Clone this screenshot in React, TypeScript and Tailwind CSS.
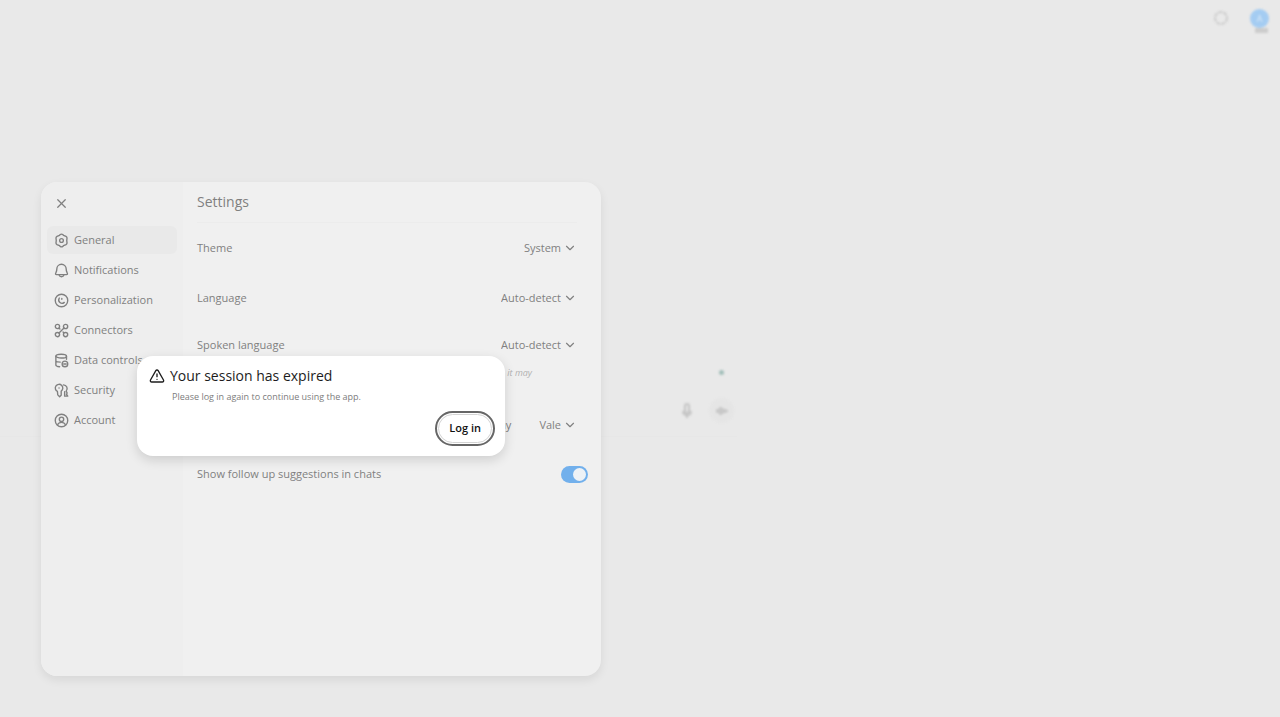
import type { ReactNode } from "react";
import { ChevronDown, TriangleAlert, X } from "lucide-react";

function Glyph({ children }: { children: ReactNode }) {
  return (
    <svg
      viewBox="0 0 24 24"
      className="size-[15px] shrink-0"
      fill="none"
      stroke="currentColor"
      strokeWidth="2.2"
      strokeLinecap="round"
      strokeLinejoin="round"
      aria-hidden="true"
    >
      {children}
    </svg>
  );
}

const sections = [
  {
    label: "General",
    icon: (
      <Glyph>
        <path d="M9.8 2.6a4 4 0 0 1 4.4 0l1 1.1 4 1.7a3 3 0 0 1 1.6 3L20.4 12l.4 3.6a3 3 0 0 1-1.6 3l-4 1.7-1 1.1a4 4 0 0 1-4.4 0l-1-1.1-4-1.7a3 3 0 0 1-1.6-3l.4-3.6-.4-3.6a3 3 0 0 1 1.6-3l4-1.7z" />
        <circle cx="12" cy="12" r="3" />
      </Glyph>
    ),
  },
  {
    label: "Notifications",
    icon: (
      <Glyph>
        <path d="M12 2a7.500 7.500 0 0 0-7.500 7.500c0 4-1.500 5.500-2 7.500-.2 1 .4 1.500 1.200 1.500h16.600c.8 0 1.400-.5 1.200-1.500-.5-2-2-3.500-2-7.500A7.500 7.500 0 0 0 12 2z" />
        <path d="M8 19c.6 2 2 3 4 3s3.400-1 4-3" />
      </Glyph>
    ),
  },
  {
    label: "Personalization",
    icon: (
      <Glyph>
        <circle cx="12" cy="12" r="10" />
        <path d="M8.500 8c-1.500 2.500-1 5.500 1 7.200 2 1.700 5 1.600 7-.2M12.500 8.500v1.500" />
      </Glyph>
    ),
  },
  {
    label: "Connectors",
    icon: (
      <Glyph>
        <circle cx="5.500" cy="5.500" r="3.400" />
        <circle cx="18.500" cy="5.500" r="3.400" />
        <circle cx="5.500" cy="18.500" r="3.400" />
        <circle cx="18.500" cy="18.500" r="3.400" />
        <path d="M16 8l-8 8M8.500 8.500l1 1M14.500 14.500l1 1" />
      </Glyph>
    ),
  },
  {
    label: "Data controls",
    icon: (
      <Glyph>
        <ellipse cx="11.500" cy="5" rx="8.500" ry="3" />
        <path d="M3 5v14c0 1.500 2.500 2.500 6 3M3 12c0 1.500 3 2.500 7 2.500M20 5v5" />
        <circle cx="17.500" cy="17.500" r="4.500" />
        <path d="M15.500 17.500h4" />
      </Glyph>
    ),
  },
  {
    label: "Security",
    icon: (
      <Glyph>
        <path d="M5.500 13.500a6 6 0 1 1 6-.5v6.500L9 22l-3-3z" />
        <path d="M15 3a6 6 0 0 1 4.500 10l1.500 3-1 2 2 3h-5v-7" />
        <path d="M8 8h.1" />
      </Glyph>
    ),
  },
  {
    label: "Account",
    icon: (
      <Glyph>
        <circle cx="12" cy="12" r="10" />
        <circle cx="12" cy="10" r="3.500" />
        <path d="M6 18.500c1-2.500 3.200-3.500 6-3.500s5 1 6 3.500" />
      </Glyph>
    ),
  },
];

function Picker({ id, options }: { id: string; options: string[] }) {
  return (
    <div className="flex items-center gap-[2px]">
      <select id={id} className="field-sizing-content appearance-none bg-transparent text-right outline-none">
        {options.map((o) => (
          <option key={o}>{o}</option>
        ))}
      </select>
      <ChevronDown size={14} className="pointer-events-none" />
    </div>
  );
}

function SettingsDialog() {
  return (
    <div
      role="dialog"
      aria-labelledby="settings-title"
      className="absolute top-[182px] left-[41px] flex min-h-[494px] w-[560px] overflow-hidden rounded-2xl bg-[#f0f0f0] text-[11px] text-[#808080] shadow-[0_4px_10px_rgba(0,0,0,0.08)]"
    >
      <nav className="w-[142px] shrink-0 bg-[#eeeeee] pt-[14px] pr-[6px] pl-[6px]">
        <button type="button" aria-label="Close" className="ml-[7px] flex size-[15px] items-center justify-center">
          <X size={15} />
        </button>
        <ul className="mt-[15px]">
          {sections.map((s, i) => (
            <li key={s.label} className="pb-[2px]">
              <button
                type="button"
                className={`flex h-7 w-full items-center gap-[5px] rounded-md pl-[7px] ${i === 0 ? "bg-[#e9e9e9]" : ""}`}
              >
                {s.icon}
                {s.label}
              </button>
            </li>
          ))}
        </ul>
      </nav>

      <div className="flex-1 pr-[24px] pl-[14px]">
        <h2 id="settings-title" className="flex h-[41px] items-center border-b border-[#ececec] text-sm">
          Settings
        </h2>
        <div className="flex h-[50px] items-center justify-between">
          <label htmlFor="theme">Theme</label>
          <Picker id="theme" options={["System", "Light", "Dark"]} />
        </div>
        <div className="flex h-[50px] items-center justify-between">
          <label htmlFor="language">Language</label>
          <Picker id="language" options={["Auto-detect", "English"]} />
        </div>
        <div className="h-[77px]">
          <div className="flex h-[44px] items-center justify-between">
            <label htmlFor="spoken">Spoken language</label>
            <Picker id="spoken" options={["Auto-detect", "English"]} />
          </div>
          <p className="pr-[45px] text-right text-[9px] leading-3 text-[#b0b0b0] italic">it may</p>
        </div>
        <div className="flex h-[50px] items-center justify-between">
          <label htmlFor="voice">Voice</label>
          <div className="flex items-center gap-7">
            <button type="button">Play</button>
            <Picker id="voice" options={["Vale", "Breeze"]} />
          </div>
        </div>
        <div className="-mr-[11px] flex h-[48px] items-center justify-between">
          <label htmlFor="follow-up">Show follow up suggestions in chats</label>
          <input
            id="follow-up"
            type="checkbox"
            role="switch"
            defaultChecked
            className="flex h-[17px] w-[27px] appearance-none items-center justify-end rounded-full bg-[#72b0ec] px-0.5 before:size-[13px] before:rounded-full before:bg-[#eef2f6]"
          />
        </div>
      </div>
    </div>
  );
}

function SessionDialog() {
  return (
    <div
      role="alertdialog"
      aria-labelledby="session-title"
      aria-describedby="session-text"
      className="absolute top-[356px] left-[137px] w-[368px] rounded-2xl bg-white py-[10px] pr-[10px] pl-3 shadow-[0_4px_12px_rgba(0,0,0,0.14)]"
    >
      <h1 id="session-title" className="flex h-5 items-center gap-[5px] text-sm text-[#1c1c1c]">
        <TriangleAlert size={16} strokeWidth={2} />
        Your session has expired
      </h1>
      <p id="session-text" className="mt-1 pl-[23px] text-[9px] leading-[14px] text-[#7c7c7c]">
        Please log in again to continue using the app.
      </p>
      <div className="mt-[7px] flex justify-end">
        <button
          type="button"
          className="h-[35px] rounded-full border-2 border-[#666666] bg-white p-px text-[11px] font-semibold text-[#111111]"
        >
          <span className="flex h-full items-center rounded-full border border-[#d4d4d4] px-[10px]">Log in</span>
        </button>
      </div>
    </div>
  );
}

export default function App() {
  return (
    <div className="relative flex min-h-screen flex-col overflow-hidden bg-[#e9e9e9] font-['Open_Sans',sans-serif]">
      <header className="flex items-start justify-end gap-[22px] pt-[9px] pr-[11px] blur-[1px]">
        <button type="button" aria-label="Temporary chat" className="pt-[2px] text-[#cccccc]">
          <svg viewBox="0 0 14 14" className="size-[14px]" fill="none" stroke="currentColor" strokeWidth="2">
            <circle cx="7" cy="7" r="6" strokeDasharray="4 1" />
          </svg>
        </button>
        <button type="button" aria-label="Profile" className="flex flex-col items-center">
          <span className="flex size-[19px] items-center justify-center rounded-full bg-[#a4ccf2] text-[9px] text-[#dcebf8]">
            A
          </span>
          <span className="ml-1 h-[5px] w-[13px] bg-[#cccccc]" />
        </button>
      </header>

      <main className="mt-[337px] w-[737px]">
        <div className="flex justify-end pr-[13px]">
          <span className="size-[5px] rounded-full bg-[#a3bfba] blur-[1px]" />
        </div>
        <div className="mt-[23px] flex items-center justify-end gap-[17px] border-b border-[#e7e7e7] pr-[3px] pb-[13px]">
          <button type="button" aria-label="Dictate" className="text-[#c4c4c4] blur-[1px]">
            <svg viewBox="0 0 10 16" className="h-4 w-[10px]" fill="none" stroke="currentColor" strokeWidth="2">
              <rect x="3" y="1" width="4" height="9" rx="2" />
              <path d="M1 8c0 3 2 4 4 4s4-1 4-4M5 12v3" />
            </svg>
          </button>
          <button
            type="button"
            aria-label="Voice mode"
            className="flex size-[25px] items-center justify-center rounded-full bg-[#e5e5e5] blur-[1px]"
          >
            <svg viewBox="0 0 14 10" className="h-[10px] w-[14px]" fill="#c8c8c8">
              <path d="M1 3h3V1h3v1l6 2v2L7 8v1H4V7H1z" />
            </svg>
          </button>
        </div>
      </main>

      <SettingsDialog />
      <SessionDialog />
    </div>
  );
}
